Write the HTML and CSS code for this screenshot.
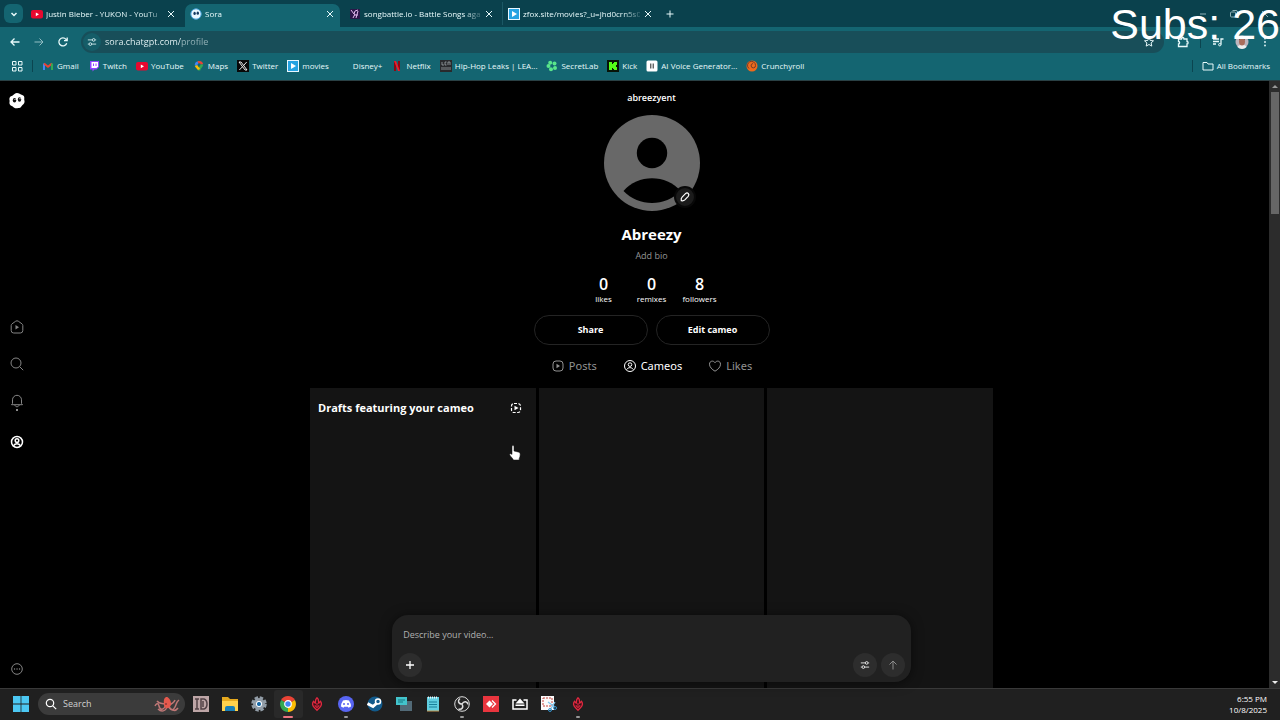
FILE: index.html
```html
<!DOCTYPE html>
<html lang="en">
<head>
<meta charset="utf-8">
<meta name="viewport" content="width=device-width, initial-scale=1">
<title>Sora</title>
<link rel="stylesheet" href="styles.css">
</head>
<body>
<svg class="sprite" aria-hidden="true">
  <symbol id="x" viewBox="0 0 10 10"><path d="M2 2l6 6M8 2l-6 6"/></symbol>
  <symbol id="youtube" viewBox="0 0 12 12"><rect x="0" y="2" width="12" height="8.5" rx="2" fill="#e8082f" stroke="none"/><path d="M4.8 4.4v3.8L8 6.3z" fill="#fff" stroke="none"/></symbol>
  <symbol id="play-tile" viewBox="0 0 12 12"><rect width="12" height="12" fill="#e9f7ff" stroke="none"/><rect x="1" y="1" width="10" height="10" fill="#25a3e2" stroke="none"/><path d="M4 3v6l5-3z" fill="#fff" stroke="none"/></symbol>
  <symbol id="person" viewBox="0 0 14 14"><circle cx="7" cy="7" r="5.500"/><circle cx="7" cy="5.600" r="1.800"/><path d="M3.600 10.600c1.600-2.600 5.200-2.600 6.800 0"/></symbol>
  <symbol id="flame" viewBox="0 0 16 18"><path d="M8 2c3 2.500 1 4 2 6l2-2c2 3 1 5-1 7l-3 3-3-3c-2-2-3-4-1-7l2 2c1-2-1-3 2-6z" fill="#3d1019" stroke="#e0283f" stroke-width="1.500"/><path d="M8 8v3M5.500 10.500L8 13l2.500-2.500" stroke="#e0283f" stroke-width="1.300"/></symbol>
  <symbol id="sliders" viewBox="0 0 12 12"><path d="M1 3.500h5M10 3.500h1M1 8.500h1M6 8.500h5"/><circle cx="8" cy="3.500" r="1.600"/><circle cx="4" cy="8.500" r="1.600"/></symbol>
</svg>

<header class="browser">
  <div class="tabstrip">
    <button class="tab-search" aria-label="Search tabs"><svg viewBox="0 0 10 10" class="i10"><path d="M2.500 4l2.500 2.500L7.500 4" stroke-width="1.500"/></svg></button>
    <div class="tabs">
      <div class="tab"><svg class="i12"><use href="#youtube"/></svg><span class="tab-title">Justin Bieber - YUKON - YouTu</span><button class="close" aria-label="Close tab"><svg class="i10"><use href="#x"/></svg></button></div>
      <div class="tab active"><svg class="i12" viewBox="0 0 12 12"><circle cx="6" cy="6" r="5.200" fill="#e9f8ff" stroke="#4ba4dc"/><ellipse cx="4.600" cy="5.400" rx="1.200" ry="1.600" fill="#153a60" stroke="none"/><ellipse cx="7.800" cy="5.200" rx="1.200" ry="1.600" fill="#153a60" stroke="none"/></svg><span class="tab-title">Sora</span><button class="close" aria-label="Close tab"><svg class="i10"><use href="#x"/></svg></button></div>
      <div class="tab"><svg class="i12" viewBox="0 0 12 12"><rect x="1" y="1" width="10" height="10" rx="1" fill="#2b1749" stroke="none"/><path d="M2 2l3 4 1-3 3-1M6 6l-2 4M9 3L7 10M5 7h4" stroke="#e3b8ef"/></svg><span class="tab-title">songbattle.io - Battle Songs aga</span><button class="close" aria-label="Close tab"><svg class="i10"><use href="#x"/></svg></button></div>
      <div class="tab divided"><svg class="i12"><use href="#play-tile"/></svg><span class="tab-title">zfox.site/movies?_u=jhd0crn5s0</span><button class="close" aria-label="Close tab"><svg class="i10"><use href="#x"/></svg></button></div>
    </div>
    <button class="new-tab" aria-label="New tab"><svg class="i10" viewBox="0 0 10 10"><path d="M5 1.500v7M1.500 5h7"/></svg></button>
    <div class="window-controls">
      <button aria-label="Minimize"><svg class="i10" viewBox="0 0 10 10"><path d="M2 5h6"/></svg></button>
      <button aria-label="Restore"><svg class="i10" viewBox="0 0 10 10"><rect x="1.500" y="3" width="5" height="5" rx="1"/><path d="M3.500 1.500H7q1.500 0 1.500 1.500v3"/></svg></button>
      <button aria-label="Close"><svg class="i10"><use href="#x"/></svg></button>
    </div>
  </div>
  <div class="toolbar">
    <div class="history">
      <button aria-label="Back"><svg class="i12" viewBox="0 0 12 12"><path d="M10.500 6h-8.500M5.500 2.500L2 6l3.500 3.500" stroke-width="1.300"/></svg></button>
      <button aria-label="Forward" class="dim"><svg class="i12" viewBox="0 0 12 12"><path d="M1.500 6H10M6.500 2.500L10 6 6.500 9.500"/></svg></button>
      <button aria-label="Reload"><svg class="i12" viewBox="0 0 12 12"><path d="M9.700 7.200A4 4 0 1 1 9 3.400L10 4.500M10.200 1.500v3.200H7" stroke-width="1.300"/></svg></button>
    </div>
    <div class="omnibox">
      <button class="site-info" aria-label="Site information"><svg class="i10"><use href="#sliders"/></svg></button>
      <input class="url" type="text" aria-label="Address" value="sora.chatgpt.com/profile">
      <button class="star" aria-label="Bookmark"><svg class="i12" viewBox="0 0 12 12"><path d="M6 1.500l1.300 3 3.200.3-2.400 2.100.7 3.200L6 8.500l-2.800 1.600.7-3.200L1.500 4.800l3.200-.3z"/></svg></button>
    </div>
    <div class="actions">
      <button aria-label="Extensions"><svg class="i12" viewBox="0 0 12 12"><path d="M1.500 3h3c0-2 2.500-2 2.500 0h3v2.500c1.500 0 1.500 2.500 0 2.500v2.500H1.500V8c1.500 0 1.500-2.500 0-2.500z" stroke-width="1.300"/></svg></button>
      <span class="rule"></span>
      <button aria-label="Media"><svg class="i12" viewBox="0 0 12 12"><path d="M1 3h6M1 5.500h6M1 8h3M9 8.500V3h2.500" stroke-width="1.300"/><circle cx="7.800" cy="8.700" r="1.200"/></svg></button>
      <button aria-label="Profile"><svg class="i14" viewBox="0 0 14 14"><circle cx="7" cy="7" r="6.500" fill="#bdb5bd" stroke="none"/><path d="M2.500 12c1-3 8-3 9 0-2 2.500-7 2.500-9 0z" fill="#eee" stroke="none"/><ellipse cx="7" cy="6.500" rx="3" ry="4" fill="#a96d5b" stroke="none"/><path d="M4 5c0-4 6-4 6 0L9 4H5z" fill="#40292a" stroke="none"/></svg></button>
      <button aria-label="Menu"><svg class="i10" viewBox="0 0 10 10"><path d="M5 1.500v.1M5 5v.1M5 8.500v.1" stroke-width="1.800" stroke-linecap="round"/></svg></button>
    </div>
  </div>
  <nav class="bookmarks" aria-label="Bookmarks">
    <button class="apps" aria-label="Apps"><svg class="i12" viewBox="0 0 12 12"><path d="M1.500 1.500H5V5H1.500zM7.500 1.500H11V5H7.500zM1.500 7.500H5V11H1.500zM7.500 7.500H11V11H7.500z"/></svg></button>
    <span class="rule"></span>
    <a href="#"><svg class="i12" viewBox="0 0 12 12" stroke-width="2"><path d="M2 10V3.500" stroke="#4285f4"/><path d="M2 3.500l4 3.300 4-3.300" stroke="#ea4335"/><path d="M10 3.500V10" stroke="#34a853"/></svg>Gmail</a>
    <a href="#"><svg class="i12" viewBox="0 0 12 12"><path d="M2 1h9v6L8.500 9.500h-2L4.500 11.500v-2H2z" fill="#9146ff" stroke="none"/><path d="M3.500 2h6.500v4.500L8.500 8H3.500z" fill="#fff" stroke="none"/><path d="M5.500 3.500v2.500M8 3.500v2.500" stroke="#9146ff"/></svg>Twitch</a>
    <a href="#"><svg class="i12"><use href="#youtube"/></svg>YouTube</a>
    <a href="#"><svg class="i12" viewBox="0 0 12 12" stroke-width="2.500"><path d="M3 5.500a3 3 0 0 1 2-3" stroke="#4285f4"/><path d="M5 2.300a3.200 3.200 0 0 1 4 2" stroke="#ea4335"/><path d="M9 4.500c0 2-3 3-3 6" stroke="#34a853"/><path d="M3 5.500c.5 1.500 2 2 3 4" stroke="#fbbc04"/></svg>Maps</a>
    <a href="#"><svg class="i12" viewBox="0 0 12 12"><path fill="#080808" stroke="none" d="M0 0h12v12H0z"/><path d="M2 2h2l6 8H8zM9.700 2L6.600 5.500M5.500 6.700L2.300 10" stroke="#fff" stroke-width=".9"/></svg>Twitter</a>
    <a href="#"><svg class="i12"><use href="#play-tile"/></svg>movies</a>
    <a href="#"><span class="i12"></span>Disney+</a>
    <a href="#"><svg class="i12" viewBox="0 0 12 12"><path d="M3 1h2v10H3zM7 1h2v10H7z" fill="#8d0713" stroke="none"/><path d="M3 1h2l4 10H7z" fill="#ed1c2c" stroke="none"/></svg>Netflix</a>
    <a href="#"><svg class="i12" viewBox="0 0 12 12"><path fill="#292a2d" stroke="none" d="M0 0h12v12H0z"/><path d="M2 2v3h2M5 2h1.500M5 2v3h1.500M8 5V2h2v3M2 7v3M4 7v3M6 7v3M8 7v3M10 7v3" stroke="#aeb5b7" stroke-width=".7"/></svg>Hip-Hop Leaks | LEA...</a>
    <a href="#"><svg class="i12" viewBox="0 0 12 12"><g fill="#59e58b" stroke="none"><circle cx="4.200" cy="2.800" r="2"/><circle cx="8.500" cy="3.500" r="2"/><circle cx="9" cy="8" r="2"/><circle cx="5" cy="9.200" r="2"/><circle cx="2.500" cy="6" r="2"/></g><circle cx="6" cy="6" r="1.300" fill="#146571" stroke="none"/></svg>SecretLab</a>
    <a href="#"><svg class="i12" viewBox="0 0 12 12"><path fill="#071307" stroke="none" d="M0 0h12v12H0z"/><path d="M2 2h3v2h1V3h1V2h3v3H9v2h1v3H7V9H6V8H5v2H2z" fill="#53fc18" stroke="none"/></svg>Kick</a>
    <a href="#"><svg class="i12" viewBox="0 0 12 12"><rect x=".5" y=".5" width="11" height="11" rx="1.500" fill="#fff" stroke="none"/><path d="M4.800 3.500v5M7.200 3.500v5" stroke="#222"/></svg>AI Voice Generator...</a>
    <a href="#"><svg class="i12" viewBox="0 0 12 12"><circle cx="6" cy="6" r="5.500" fill="#ef6a1a" stroke="none"/><path d="M3 8.500a4 4 0 1 1 6.500-3A2.200 2.200 0 1 1 7 3.500" stroke="#743b29"/></svg>Crunchyroll</a>
    <span class="rule push"></span>
    <a href="#"><svg class="i12" viewBox="0 0 12 12"><path d="M1 2.500h4l1 1.500h5v6H1z"/></svg>All Bookmarks</a>
  </nav>
</header>

<div class="viewport">
  <aside class="sidebar">
    <a href="#" aria-label="Sora home"><svg class="i18" viewBox="0 0 18 18"><path d="M9 1c2 0 2.500 1 4 1.500s3.300 1 3.300 3-.2 2 .2 3.500-.7 3-2 4-1.500 3-3.500 3-2 .5-3.700.2-2-1.700-3.500-2.200S1 11.500 1.500 10 1 8 1.500 6s2.100-1.700 3.200-2.500S7 1 9 1z" fill="#fff" stroke="none"/><ellipse cx="6.500" cy="8.300" rx="1.700" ry="2.300" fill="#111" stroke="none"/><ellipse cx="11.500" cy="7.500" rx="1.700" ry="2.300" fill="#111" stroke="none"/><circle cx="7" cy="7.500" r=".6" fill="#fff" stroke="none"/><circle cx="12" cy="6.700" r=".6" fill="#fff" stroke="none"/></svg></a>
    <nav class="side-nav" aria-label="Main">
      <a href="#" aria-label="Home"><svg class="i14" viewBox="0 0 14 14"><path d="M1.200 5.500q0-1 .8-1.600L5.700 1.200q1.300-.8 2.600 0L12 3.900q.8.600.8 1.600v5q0 2.500-2.500 2.500H3.700q-2.500 0-2.500-2.500z"/><path d="M5.500 5v4.500L9 7.200z" fill="currentColor" stroke="none"/></svg></a>
      <a href="#" aria-label="Search"><svg class="i14" viewBox="0 0 14 14"><circle cx="6" cy="6" r="5"/><path d="M9.700 9.700l3.500 3.500"/></svg></a>
      <a href="#" aria-label="Activity" class="notify"><svg class="i14" viewBox="0 0 14 14"><path d="M2.500 9.500V5.800a4.500 4.500 0 0 1 9 0v3.700l1 1.200h-11zM4.800 11c.5 2.300 3.900 2.300 4.400 0"/></svg></a>
      <a href="#" aria-label="Profile" class="current"><svg class="i14" stroke-width="1.500"><use href="#person"/></svg></a>
    </nav>
    <button aria-label="More"><svg class="i14" viewBox="0 0 14 14"><circle cx="7" cy="7" r="5.300"/><path d="M4.500 7h.1M7 7h.1M9.500 7h.1" stroke-width="1.300" stroke-linecap="round"/></svg></button>
  </aside>

  <main class="content">
    <p class="handle">abreezyent</p>
    <div class="avatar">
      <svg viewBox="0 0 96 96" class="portrait"><circle cx="48" cy="48" r="48" fill="#686868" stroke="none"/><circle cx="48" cy="38" r="15.200" fill="#000" stroke="none"/><path d="M19.500 76c14-17 43-17 57 0-15 16-42 16-57 0z" fill="#000" stroke="none"/></svg>
      <button class="edit" aria-label="Edit photo"><svg class="i12" viewBox="0 0 12 12"><path d="M2.300 9.700c-.5-2 0-2.700.8-3.500l3.400-3.500c2-2 4.500.5 2.700 2.600L5.800 8.900c-.9.900-1.800 1.200-3.500.8z" stroke-width="1.200"/></svg></button>
    </div>
    <h1 class="name">Abreezy</h1>
    <button class="bio">Add bio</button>
    <dl class="stats">
      <div><dd>0</dd><dt>likes</dt></div>
      <div><dd>0</dd><dt>remixes</dt></div>
      <div><dd>8</dd><dt>followers</dt></div>
    </dl>
    <div class="profile-actions"><button>Share</button><button>Edit cameo</button></div>
    <nav class="sections" aria-label="Profile sections">
      <a href="#"><svg class="i14" viewBox="0 0 14 14"><rect x="2" y="2" width="10" height="10" rx="3"/><path d="M5.500 4.800v4.400L9 7z" fill="currentColor" stroke="none"/></svg>Posts</a>
      <a href="#" class="current"><svg class="i14"><use href="#person"/></svg>Cameos</a>
      <a href="#"><svg class="i14" viewBox="0 0 14 14"><path d="M7 12.200C4 10.500 1.500 8 1.500 5.200c0-3.500 4-4 5.500-1.500 1.500-2.500 5.500-2 5.500 1.500 0 2.800-2.500 5.300-5.500 7z"/></svg>Likes</a>
    </nav>
    <div class="grid">
      <section class="tile"><header class="tile-head"><h2>Drafts featuring your cameo</h2><svg class="i12" viewBox="0 0 12 12"><rect x="1.500" y="1.500" width="9" height="9" rx="2.500" stroke-width="1.200" stroke-dasharray="3 1.500"/><path d="M4.500 3.800v4.400L8.500 6z" fill="#fff" stroke="none"/></svg></header></section>
      <section class="tile"></section>
      <section class="tile"></section>
    </div>
    <form class="composer">
      <input type="text" aria-label="Describe your video" placeholder="Describe your video...">
      <div class="composer-row">
        <button type="button" aria-label="Add media"><svg class="i12" viewBox="0 0 12 12"><path d="M6 2v8M2 6h8" stroke-width="1.300"/></svg></button>
        <button type="button" class="push" aria-label="Settings"><svg class="i10"><use href="#sliders"/></svg></button>
        <button type="button" class="faded" aria-label="Create"><svg class="i12" viewBox="0 0 12 12"><path d="M6 10.500V2M2.500 5.500L6 2l3.500 3.500"/></svg></button>
      </div>
    </form>
  </main>
  <div class="scrollbar" aria-hidden="true"><span class="arrow up"></span><span class="thumb"></span><span class="arrow down"></span></div>
  <svg class="cursor" viewBox="0 0 12 16"><path d="M3 1.500c0-1.300 2-1.300 2 0V6l5 1.200q1.200.5 1.200 1.800c0 2-.5 3.500-1 4.500V15H4.500C3.500 13 1.500 11.500.8 10S2 8.300 3 9.500z" fill="#fff" stroke="#111" stroke-width=".5"/></svg>
</div>

<footer class="taskbar">
  <button class="app" aria-label="Start"><svg class="i16" viewBox="0 0 16 16"><path d="M0 0h7.600v7.600H0zM8.400 0H16v7.600H8.400zM0 8.400h7.600V16H0zM8.400 8.400H16V16H8.400z" fill="#4cc8f3" stroke="none"/></svg></button>
  <label class="search"><svg class="i12" viewBox="0 0 12 12"><circle cx="5" cy="5" r="3.700" stroke-width="1.200"/><path d="M7.800 7.800l3.400 3.400" stroke-width="1.200"/></svg><input type="text" aria-label="Search" placeholder="Search"><svg class="octopus" viewBox="0 0 26 16"><path d="M12 9C9 15 6 14 5 10S2 8 1 10M13 10c-1 6-6 6-9 3M15 10c2 5 4 5 6 1s1-5 4-7M14 10c4 6 8 5 10 2M13 9C9 6 6 9 3 5M16 9c3-3 4-2 5-5" stroke="#bf7776" stroke-width="1.500"/><path d="M10 8C9 2 12 0 14 1.500S17 5 17 8s-3 5-5 4-2-2-2-4z" fill="#e6594d" stroke="none"/><circle cx="12" cy="8" r=".8" fill="#501e25" stroke="none"/></svg></label>
  <button class="app" aria-label="ID"><svg class="i16" viewBox="0 0 16 16"><path fill="#bda5a6" stroke="none" d="M0 0h16v16H0z"/><path d="M2 3h4M4 3v10M2 13h4M8 3h3q3 1 3 5t-3 5H8zM10 5v6" stroke="#514146" stroke-width="1.500"/></svg></button>
  <button class="app" aria-label="File Explorer"><svg class="i16" viewBox="0 0 16 16"><path d="M0 1h6l2 2h8v11H0z" fill="#e6a91e" stroke="none"/><path d="M0 5h16v10H0z" fill="#ffd14c" stroke="none"/><path d="M3 15v-3q0-2 2-2h6q2 0 2 2v3z" fill="#187fb7" stroke="none"/></svg></button>
  <button class="app" aria-label="Settings"><svg class="i16" viewBox="0 0 16 16"><circle cx="8" cy="8" r="6.500" stroke="#929da7" stroke-width="2.500" stroke-dasharray="3.400 1.700"/><circle cx="8" cy="8" r="4.500" fill="#e2e9f0" stroke="#929da7" stroke-width="3"/><circle cx="8" cy="8" r="2.600" fill="#1769a7" stroke="#fff"/></svg></button>
  <button class="app open" aria-label="Chrome"><svg class="i16" viewBox="0 0 16 16"><path d="M8 8L1.100 4A8 8 0 0 1 14.900 4z" fill="#ea4335" stroke="none"/><path d="M8 8l6.900-4A8 8 0 0 1 8 16z" fill="#fbbc04" stroke="none"/><path d="M8 8v8A8 8 0 0 1 1.100 4z" fill="#34a853" stroke="none"/><circle cx="8" cy="8" r="3.300" fill="#4285f4" stroke="#fff" stroke-width="1.200"/></svg></button>
  <button class="app" aria-label="Flame"><svg class="i16"><use href="#flame"/></svg></button>
  <button class="app running" aria-label="Discord"><svg class="i16" viewBox="0 0 16 16"><circle cx="8" cy="8" r="8" fill="#5865f2" stroke="none"/><path d="M5 4.500q3-1 6 0 2 3 2 6l-2.500 1.200-.7-1H6.200l-.7 1L3 10.500q0-3 2-6z" fill="#fff" stroke="none"/><circle cx="6" cy="8" r="1" fill="#5865f2" stroke="none"/><circle cx="10" cy="8" r="1" fill="#5865f2" stroke="none"/></svg></button>
  <button class="app" aria-label="Steam"><svg class="i16" viewBox="0 0 16 16"><circle cx="8" cy="8" r="7.500" fill="#125a8b" stroke="none"/><path d="M.5 7.500L6 10.500l4.500-4" stroke="#fff" stroke-width="3"/><circle cx="11" cy="5.500" r="2.500" fill="#125a8b" stroke="#fff" stroke-width="1.500"/></svg></button>
  <button class="app" aria-label="Remote desktop"><svg class="i16" viewBox="0 0 16 16"><path fill="#526a77" stroke="none" d="M4 5h12v10H4z"/><path fill="#43c4cc" stroke="none" d="M0 1h11v8H0z"/><path d="M2 4h7M2 6h5" stroke="#167781"/></svg></button>
  <button class="app" aria-label="Notepad"><svg class="i16" viewBox="0 0 16 16"><path fill="#61cee0" stroke="none" d="M2 1h12v14H2z"/><path d="M4 6h8M4 8.500h8M4 11h8" stroke="#187f99"/><path d="M3 1.500h10" stroke="#f2f7fa" stroke-width="2" stroke-dasharray="1 1"/><path d="M2 15h12" stroke="#cc9a55"/></svg></button>
  <button class="app running" aria-label="OBS"><svg class="i16" viewBox="0 0 16 16"><circle cx="8" cy="8" r="7.300" fill="#252525" stroke="#ddd"/><path d="M8 8C4 8 3.500 4.500 6 2.500M8 8c2-3.500 5.500-2.500 6 .5M8 8c2 3.500-.5 6-3.500 5" stroke="#ddd" stroke-width="1.500"/></svg></button>
  <button class="app" aria-label="AnyDesk"><svg class="i16" viewBox="0 0 16 16"><path fill="#e9353e" stroke="none" d="M0 0h16v16H0z"/><path d="M3 8l3.500-3.500L10 8l-3.500 3.500z" fill="#fff" stroke="none"/><path d="M9 4.500L12.500 8 9 11.500" stroke="#fff" stroke-width="1.300"/></svg></button>
  <button class="app" aria-label="Cast"><svg class="i16" viewBox="0 0 16 16"><path d="M4.500 4H1v9h14V4h-3.500" stroke="#fff" stroke-width="1.500"/><path d="M8 2.500l4.500 5h-9zM3.500 8.500h9V10h-9z" fill="#fff" stroke="none"/></svg></button>
  <button class="app" aria-label="Snipping Tool"><svg class="i16" viewBox="0 0 16 16"><path fill="#fafafa" stroke="none" d="M0 0h13v14H0z"/><rect x="2" y="2" width="9" height="8" stroke="#c4423b" stroke-dasharray="2 1"/><path d="M7 6l7 5M14 6l-5 8" stroke="#7dc5ed" stroke-width="1.300"/><circle cx="9" cy="14" r="1.500" stroke="#3594ce"/><circle cx="14" cy="12" r="1.500" stroke="#3594ce"/></svg></button>
  <button class="app running" aria-label="Flame app"><svg class="i16"><use href="#flame"/></svg></button>
  <div class="clock"><time>6:55 PM</time><time>10/8/2025</time></div>
</footer>
<div class="subs">Subs: 26</div>
</body>
</html>
```
FILE: styles.css
```css
* { box-sizing: border-box; margin: 0; padding: 0; }
body {
  display: flex; flex-direction: column; height: 100vh; overflow: hidden; position: relative;
  background: #000; color: #fff; font: 9px/12px "Open Sans", "Noto Sans", sans-serif;
}
button, input { font: inherit; color: inherit; background: none; border: 0; outline: 0; }
button { display: grid; place-items: center; }
a { color: inherit; text-decoration: none; }
svg { fill: none; stroke: currentColor; flex: none; display: block; }
.sprite { position: absolute; width: 0; height: 0; }
.i10 { width: 10px; height: 10px; }
.i12 { width: 12px; height: 12px; }
.i14 { width: 14px; height: 14px; }
.i16 { width: 16px; height: 16px; }
.i18 { width: 18px; height: 18px; }
.push { margin-left: auto; }
.dim { opacity: .6; }
.rule { width: 1px; height: 12px; background: #0b4550; }

.browser { background: #146571; border-bottom: 1px solid #2a4044; color: #e8fafb; }
.tabstrip { display: flex; align-items: center; height: 27px; background: #0a414d; padding-left: 4px; }
.tab-search { width: 19px; height: 19px; border-radius: 6px; background: #146571; }
.tabs { display: flex; align-self: stretch; margin-left: 3px; gap: 4px; }
.tab { display: flex; align-items: center; gap: 3px; width: 155px; padding: 0 5px; }
.tab.active { background: #146571; border-radius: 7px 7px 0 0; margin-top: 4px; padding-bottom: 4px; }
.tab.divided { box-shadow: -3px 0 0 -2px #1b5865; }
.tab-title {
  flex: 1; min-width: 0; white-space: nowrap; font-size: 8px;
  mask-image: linear-gradient(90deg, #000 85%, #0003);
}
.close { width: 10px; height: 16px; }
.new-tab { width: 20px; height: 20px; margin-left: 2px; }
.window-controls { display: flex; gap: 21px; margin-left: auto; padding-right: 10px; opacity: .6; }
.toolbar { display: flex; align-items: center; height: 30px; padding: 0 10px 0 9px; }
.history { display: flex; gap: 12px; }
.omnibox {
  display: flex; align-items: center; flex: 1; height: 22px; margin-left: 12px; padding: 0 9px 0 2px;
  border-radius: 11px; background: #184e59;
}
.site-info { width: 18px; height: 18px; border-radius: 9px; background: #155d68; }
.url {
  flex: 1; min-width: 0; margin-left: 4px; color: transparent; background-clip: text;
  background-image: linear-gradient(90deg, #f2feff 76px, #9bb8bd 76px);
}
.actions { display: flex; align-items: center; gap: 11px; margin-left: 13px; }
.bookmarks { display: flex; align-items: center; gap: 9px; height: 23px; padding: 0 10px 6px 11px; font-size: 8px; white-space: nowrap; }
.bookmarks a { display: flex; align-items: center; gap: 3px; }

.viewport { display: flex; flex: 1; min-height: 0; position: relative; }
.sidebar { display: flex; flex-direction: column; align-items: center; justify-content: space-between; width: 34px; padding: 11px 0 12px; color: #858585; }
.side-nav { display: flex; flex-direction: column; gap: 23px; margin-bottom: 4px; }
.side-nav a { position: relative; }
.side-nav .current { margin-top: 4px; color: #fff; }
.notify::after { content: ""; position: absolute; left: 6px; top: 15px; width: 2px; height: 2px; border-radius: 1px; background: #bbb; }
.content { display: flex; flex-direction: column; align-items: center; flex: 1; min-width: 0; position: relative; padding-top: 11px; }
.handle { font-weight: 600; }
.avatar { position: relative; margin-top: 11px; }
.portrait { width: 96px; height: 96px; }
.edit { position: absolute; right: 4px; bottom: 3px; width: 22px; height: 22px; border-radius: 11px; background: #1b1b1b; border: 2px solid #080808; }
.name { margin-top: 12px; font-size: 15px; line-height: 22px; font-weight: 700; }
.bio { margin-top: 5px; color: #959595; line-height: 12px; }
.stats { display: flex; margin-top: 13px; text-align: center; }
.stats div { width: 48px; }
.stats dd { font-size: 16px; line-height: 18px; font-weight: 600; }
.stats dt { font-size: 8px; line-height: 12px; }
.profile-actions { display: flex; gap: 8px; margin-top: 10px; }
.profile-actions button { width: 114px; height: 30px; border: 1px solid #242424; border-radius: 15px; font-weight: 700; }
.sections { display: flex; gap: 26px; margin-top: 13px; color: #929292; font-size: 11px; line-height: 16px; }
.sections a { display: flex; align-items: center; gap: 4px; }
.sections .current { color: #fff; }
.sections { font-family: "Noto Sans", "Open Sans", sans-serif; }
.grid { display: grid; grid-template-columns: repeat(3, 1fr); gap: 3px; flex: 1; width: 100%; max-width: 683px; margin-top: 14px; }
.tile { background: #141414; }
.tile-head { display: flex; align-items: center; justify-content: space-between; padding: 12px 14px 0 8px; }
.tile h2 { font-size: 11px; line-height: 16px; font-weight: 700; }
.composer {
  position: absolute; bottom: 6px; left: 0; right: 0; width: 42%; min-width: 400px; margin: 0 auto;
  padding: 11px 6px 5px; border-radius: 16px; background: #212121; box-shadow: 0 1px 12px #0008;
}
.composer input { display: block; width: 100%; height: 16px; padding: 0 5px; }
.composer input::placeholder { color: #b0b0b0; }
.composer-row { display: flex; gap: 4px; margin-top: 11px; }
.composer-row button { width: 24px; height: 24px; border-radius: 12px; background: #2d2d2d; }
.composer-row .faded { color: #8c8c8c; }
.scrollbar { display: flex; flex-direction: column; align-items: center; width: 11px; background: #2c2c2c; padding: 4px 0; }
.thumb { width: 8px; height: 122px; margin-top: 4px; background: #666; }
.arrow { border: 3px solid transparent; }
.up { border-top: 0; border-bottom-color: #999; }
.down { margin-top: auto; border-bottom: 0; border-top-color: #eee; }
.cursor { position: absolute; left: 509px; top: 364px; width: 12px; height: 16px; }

.taskbar { display: flex; align-items: center; height: 32px; padding: 0 13px 2px 7px; border-top: 1px solid #393939; background: #202020; }
.app { position: relative; flex: none; width: 2.3%; height: 28px; border-radius: 3px; }
.open { background: #292929; }
.open::after, .running::after { content: ""; position: absolute; bottom: 0; left: 50%; width: 4px; height: 2px; margin-left: -2px; border-radius: 1px; background: #999; }
.open::after { width: 10px; margin-left: -5px; background: #ed7580; }
.search { display: flex; align-items: center; gap: 6px; width: 147px; height: 22px; margin: 0 2px; padding: 0 5px 0 7px; border-radius: 11px; background: #3b3b3b; }
.search input { flex: 1; min-width: 0; }
.search input::placeholder { color: #d0d0d0; }
.octopus { width: 26px; height: 16px; }
.clock { display: flex; flex-direction: column; margin-left: auto; font-size: 8px; line-height: 11px; text-align: right; }
.subs { position: absolute; right: 0; top: 4px; font: 43px/40px "Liberation Sans", Arial, sans-serif; }
```
